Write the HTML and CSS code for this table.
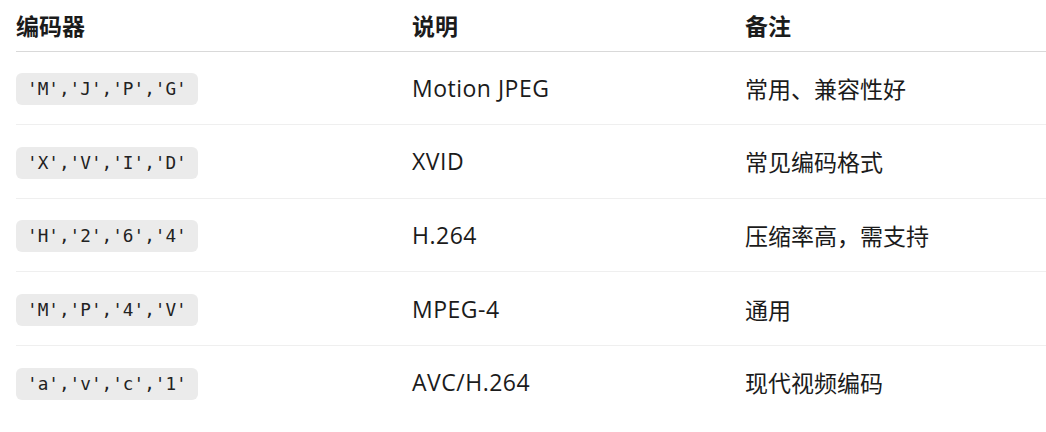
FILE: index.html
```html
<!DOCTYPE html>
<html lang="zh-CN">
<head>
<meta charset="utf-8">
<title>编码器</title>
<link rel="stylesheet" href="styles.css">
</head>
<body>
<div class="page">
  <table class="codecs">
    <thead>
      <tr>
        <th class="c1">编码器</th>
        <th class="c2">说明</th>
        <th class="c3">备注</th>
      </tr>
    </thead>
    <tbody>
      <tr><td><code>'M','J','P','G'</code></td><td class="desc">Motion JPEG</td><td>常用、兼容性好</td></tr>
      <tr><td><code>'X','V','I','D'</code></td><td class="desc">XVID</td><td>常见编码格式</td></tr>
      <tr><td><code>'H','2','6','4'</code></td><td class="desc">H.264</td><td>压缩率高，需支持</td></tr>
      <tr><td><code>'M','P','4','V'</code></td><td class="desc">MPEG-4</td><td>通用</td></tr>
      <tr><td><code>'a','v','c','1'</code></td><td class="desc">AVC/H.264</td><td>现代视频编码</td></tr>
    </tbody>
  </table>
</div>
</body>
</html>
```

FILE: styles.css
```css
html, body {
  margin: 0;
  padding: 0;
  background: #ffffff;
}

.page {
  padding: 0 0 12px 16px;
  overflow: hidden;
}

.codecs {
  width: 1030px;
  border-collapse: collapse;
  table-layout: fixed;
  font-family: "Open Sans", "Noto Sans CJK SC", sans-serif;
  font-size: 23px;
  color: #1b1b1b;
}

.codecs th {
  height: 51px;
  padding: 0;
  text-align: left;
  font-weight: 700;
  vertical-align: middle;
  border-bottom: 1px solid #d9d9d9;
  box-sizing: border-box;
}

.codecs th.c1 { width: 396px; }
.codecs th.c2 { width: 333px; }
.codecs th.c3 { width: 301px; }

.codecs td {
  height: 73.6px;
  padding: 0;
  vertical-align: middle;
  border-bottom: 1px solid #efefef;
  box-sizing: border-box;
}

.codecs td.desc {
  letter-spacing: 0.5px;
}

.codecs tbody tr:last-child td {
  border-bottom: none;
}

.codecs code {
  display: inline-block;
  padding: 0 11px;
  height: 32px;
  line-height: 32px;
  border-radius: 6px;
  background: #ebebeb;
  font-family: "DejaVu Sans Mono", monospace;
  font-size: 17.7px;
  color: #222222;
}
```
